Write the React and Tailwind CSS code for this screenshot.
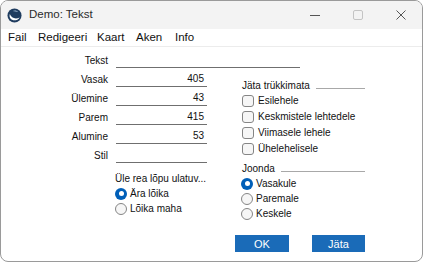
import React from "react";

const FIELDS = [
  { label: "Vasak", value: "405" },
  { label: "Ülemine", value: "43" },
  { label: "Parem", value: "415" },
  { label: "Alumine", value: "53" },
  { label: "Stil", value: "" },
];

const MENU = [
  { name: "Fail", w: "w-[30px]" },
  { name: "Redigeeri", w: "w-[59px]" },
  { name: "Kaart", w: "w-[39px]" },
  { name: "Aken", w: "w-[39px]" },
  { name: "Info", w: "w-[40px]" },
];

const CHECKS = ["Esilehele", "Keskmistele lehtedele", "Viimasele lehele", "Ühelehelisele"];

const Radio = ({ checked, label }) => (
  <div className="h-[15px] flex items-center gap-[3px]">
    {checked ? (
      <span className="w-[12px] h-[12px] rounded-full bg-[#005fb8] flex items-center justify-center">
        <span className="w-[5px] h-[5px] rounded-full bg-white" />
      </span>
    ) : (
      <span className="w-[12px] h-[12px] rounded-full border border-[#858585] bg-[#f6f6f6]" />
    )}
    <span>{label}</span>
  </div>
);

const Check = ({ label }) => (
  <div className="h-[16px] flex items-center gap-[4px]">
    <span className="w-[12px] h-[12px] rounded-[3px] border border-[#858585] bg-[#f6f6f6]" />
    <span>{label}</span>
  </div>
);

const GroupHead = ({ title }) => (
  <div className="h-[15px] flex items-center gap-[6px]">
    <span>{title}</span>
    <span className="flex-1 h-px bg-[#a8a8a8] mt-[5px]" />
  </div>
);

export default function App() {
  return (
    <div
      className="w-[423px] h-[262px] bg-white border border-[#9a9a9a] rounded-[8px] overflow-hidden flex flex-col text-[#111]"
      style={{ fontFamily: '"Liberation Sans", Arial, sans-serif' }}
    >
      {/* Title bar */}
      <div className="h-[28px] bg-[#f3f3f3] flex items-center shrink-0">
        <svg className="ml-[6px] w-[15px] h-[15px]" viewBox="0 0 16 16">
          <circle cx="8" cy="8" r="7.5" fill="#1f3c5f" />
          <path d="M3 6.5c1.5 4 6 6 10.5 3.5-2 3.5-7.5 4.5-10 1C2.6 9.8 2.6 8 3 6.5z" fill="#fff" />
          <path d="M6 3.2c2-1 4.8-.6 6 1.2-1.8-.8-4-.9-6-1.2z" fill="#9fb6cf" />
        </svg>
        <span className="ml-[7px] text-[11.5px] text-[#2b2b2b]">Demo: Tekst</span>
        <div className="flex-1" />
        <svg className="w-[10px] h-[10px] mr-[33px]" viewBox="0 0 10 10">
          <path d="M0 5.5h10" stroke="#555" strokeWidth="1" />
        </svg>
        <svg className="w-[10px] h-[10px] mr-[33px]" viewBox="0 0 10 10">
          <rect x="0.5" y="0.5" width="9" height="9" rx="1.5" fill="none" stroke="#c4c4c4" strokeWidth="1" />
        </svg>
        <svg className="w-[10px] h-[10px] mr-[16px]" viewBox="0 0 10 10">
          <path d="M0.5 0.5l9 9M9.5 0.5l-9 9" stroke="#555" strokeWidth="1" />
        </svg>
      </div>

      {/* Menu */}
      <div className="h-[18px] flex items-center pl-[7px] text-[11.5px] border-b border-[#ececec] shrink-0">
        {MENU.map((m) => (
          <span key={m.name} className={m.w}>{m.name}</span>
        ))}
      </div>

      {/* Body */}
      <div className="flex flex-col pt-[2px] text-[10px] leading-[12px]">
        <div className="h-[19px] flex items-end">
          <span className="w-[107px] text-right pb-[1px]">Tekst</span>
          <span className="ml-[8px] w-[184px] h-[14px] border-b border-[#6f6f6f]" />
        </div>

        <div className="flex">
          {/* Left */}
          <div className="flex flex-col w-[234px]">
            {FIELDS.map((f) => (
              <div key={f.label} className="h-[19px] flex items-end">
                <span className="w-[107px] text-right pb-[1px]">{f.label}</span>
                <span className="ml-[8px] w-[91px] h-[14px] border-b border-[#6f6f6f] text-right pr-[3px]">
                  {f.value}
                </span>
              </div>
            ))}
            <div className="ml-[114px] mt-[8px] flex flex-col">
              <div className="h-[15px] flex items-center">Üle rea lõpu ulatuv...</div>
              <Radio checked label="Ära lõika" />
              <Radio label="Lõika maha" />
            </div>
          </div>

          {/* Right */}
          <div className="flex flex-col w-[130px]">
            <div className="pl-[7px] mt-[10px]">
              <GroupHead title="Jäta trükkimata" />
              {CHECKS.map((c) => (
                <Check key={c} label={c} />
              ))}
            </div>
            <div className="pl-[6px] mt-[4px]">
              <div className="pl-[1px]">
                <GroupHead title="Joonda" />
              </div>
              <Radio checked label="Vasakule" />
              <Radio label="Paremale" />
              <Radio label="Keskele" />
            </div>
            <div className="mt-[14px] flex justify-between">
              <button className="w-[54px] h-[17px] bg-[#1a6bb8] text-white text-[11px]">OK</button>
              <button className="w-[53px] h-[17px] bg-[#1a6bb8] text-white text-[11px]">Jäta</button>
            </div>
          </div>
        </div>
      </div>
    </div>
  );
}
